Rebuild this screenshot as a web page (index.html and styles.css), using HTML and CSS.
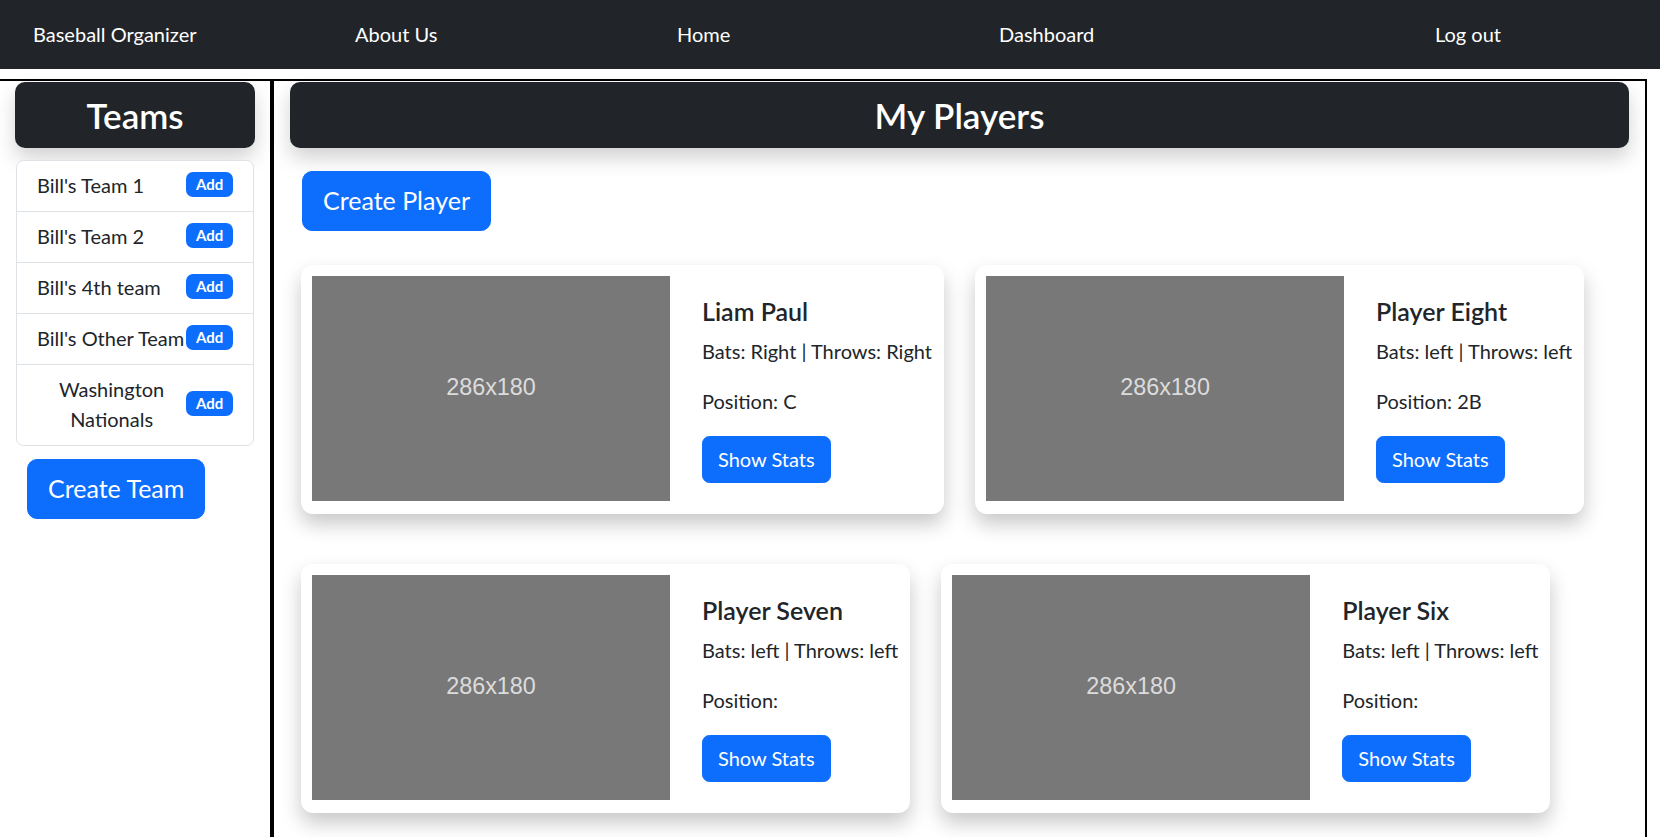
FILE: index.html
```html
<!DOCTYPE html>
<html lang="en">
<head>
<meta charset="utf-8">
<title>Baseball Organizer</title>
<link rel="stylesheet" href="styles.css">
</head>
<body>
<nav class="navbar">
  <a class="nav-item brand" href="#">Baseball Organizer</a>
  <a class="nav-item" href="#">About Us</a>
  <a class="nav-item" href="#">Home</a>
  <a class="nav-item" href="#">Dashboard</a>
  <a class="nav-item logout" href="#">Log out</a>
</nav>

<div class="layout">
  <aside class="sidebar">
    <div class="panel-head"><h3>Teams</h3></div>
    <ul class="list-group">
      <li class="list-item"><span class="team-name">Bill's Team 1</span><span class="badge">Add</span></li>
      <li class="list-item"><span class="team-name">Bill's Team 2</span><span class="badge">Add</span></li>
      <li class="list-item"><span class="team-name">Bill's 4th team</span><span class="badge">Add</span></li>
      <li class="list-item"><span class="team-name">Bill's Other Team</span><span class="badge">Add</span></li>
      <li class="list-item"><span class="team-name">Washington Nationals</span><span class="badge">Add</span></li>
    </ul>
    <button class="btn btn-lg create-team">Create Team</button>
  </aside>

  <main class="main">
    <div class="panel-head"><h3>My Players</h3></div>
    <button class="btn btn-lg create-player">Create Player</button>

    <div class="cards">
      <div class="card">
        <div class="thumb">286x180</div>
        <div class="card-body">
          <h5 class="card-title">Liam Paul</h5>
          <p>Bats: Right | Throws: Right</p>
          <p>Position: C</p>
          <button class="btn">Show Stats</button>
        </div>
      </div>
      <div class="card">
        <div class="thumb">286x180</div>
        <div class="card-body">
          <h5 class="card-title">Player Eight</h5>
          <p>Bats: left | Throws: left</p>
          <p>Position: 2B</p>
          <button class="btn">Show Stats</button>
        </div>
      </div>
      <div class="card">
        <div class="thumb">286x180</div>
        <div class="card-body">
          <h5 class="card-title">Player Seven</h5>
          <p>Bats: left | Throws: left</p>
          <p>Position: </p>
          <button class="btn">Show Stats</button>
        </div>
      </div>
      <div class="card">
        <div class="thumb">286x180</div>
        <div class="card-body">
          <h5 class="card-title">Player Six</h5>
          <p>Bats: left | Throws: left</p>
          <p>Position: </p>
          <button class="btn">Show Stats</button>
        </div>
      </div>
    </div>
  </main>
</div>
</body>
</html>
```
FILE: styles.css
```css
* { box-sizing: border-box; }

html, body {
  margin: 0;
  padding: 0;
  background: #fff;
}

body {
  font-family: Lato, "Open Sans", sans-serif;
  font-size: 20px;
  line-height: 1.5;
  color: #212529;
}

/* ---------- navbar ---------- */
.navbar {
  display: flex;
  align-items: center;
  height: 69px;
  background: #212529;
  padding: 0 0 2px 33px;
}

.nav-item {
  color: #fff;
  text-decoration: none;
  font-size: 20px;
  width: 322px;
  white-space: nowrap;
}

.nav-item.logout {
  width: auto;
  margin-left: auto;
  margin-right: 159px;
}

/* ---------- layout ---------- */
.layout {
  display: flex;
  width: 1647px;
  margin-top: 10px;
  border-top: 2px solid #000;
  align-items: stretch;
  min-height: 780px;
}

.sidebar {
  width: 272px;
  flex: 0 0 272px;
  border-right: 2px solid #000;
  padding: 1px 15px 0 15px;
}

.main {
  flex: 1 1 auto;
  border-left: 2px solid #000;
  border-right: 2px solid #000;
  padding: 1px 16px 60px 16px;
}

/* ---------- dark header panels ---------- */
.panel-head {
  background: #212529;
  color: #fff;
  border-radius: 10px;
  box-shadow: 0 10px 20px rgba(0, 0, 0, 0.18);
  padding: 12px 10px;
  text-align: center;
}

.panel-head h3 {
  margin: 0;
  font-size: 35px;
  font-weight: 600;
  line-height: 1.2;
}

/* ---------- team list ---------- */
.list-group {
  list-style: none;
  margin: 12px 1px 0 1px;
  padding: 0;
  border: 1px solid #dee2e6;
  border-radius: 7.5px;
  background: #fff;
}

.list-item {
  display: flex;
  justify-content: space-between;
  align-items: center;
  padding: 10px 20px 10px 20px;
  border-bottom: 1px solid #dee2e6;
  text-align: center;
}

.list-item:last-child { border-bottom: none; }

.team-name { position: relative; top: -1px; }

.badge {
  flex: 0 0 auto;
  display: inline-block;
  background: #0d6efd;
  color: #fff;
  font-size: 15px;
  font-weight: 700;
  line-height: 1;
  padding: 5.25px 9.75px;
  border-radius: 7px;
  margin-top: -3px;
}

/* ---------- buttons ---------- */
.btn {
  display: inline-block;
  font-family: inherit;
  font-size: 20px;
  line-height: 1.5;
  color: #fff;
  background: #0d6efd;
  border: 1px solid #0d6efd;
  border-radius: 7.5px;
  padding: 7.5px 15px;
  cursor: pointer;
}

.btn-lg {
  font-size: 25px;
  padding: 10px 20px;
  border-radius: 10px;
}

.create-team {
  margin: 13px 0 0 12px;
}

.create-player {
  margin: 23px 0 0 12px;
}

/* ---------- player cards ---------- */
.cards {
  display: flex;
  flex-wrap: wrap;
  column-gap: 31px;
  row-gap: 50px;
  margin: 34px 0 0 11px;
}

.card {
  display: flex;
  align-items: flex-start;
  background: #fff;
  border-radius: 12px;
  box-shadow: 0 10px 20px rgba(0, 0, 0, 0.22);
  padding: 11px;
}

.thumb {
  flex: 0 0 358px;
  width: 358px;
  height: 225px;
  background: #787878;
  color: #dcdcdc;
  font-family: "Liberation Sans", Arial, sans-serif;
  font-size: 23.4px;
  display: flex;
  align-items: center;
  justify-content: center;
}

.card-body {
  padding: 20px 1px 20px 32px;
  white-space: nowrap;
}

.card-title {
  margin: 0 0 10px 0;
  font-size: 25px;
  font-weight: 600;
  line-height: 1.2;
}

.card-body p {
  margin: 0 0 20px 0;
  min-height: 30px;
}
```
